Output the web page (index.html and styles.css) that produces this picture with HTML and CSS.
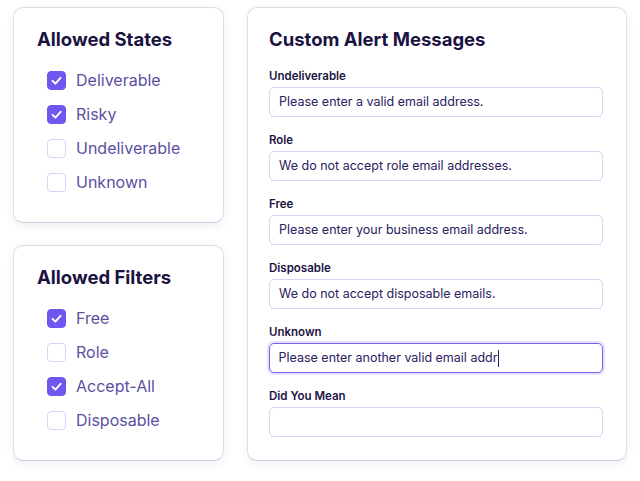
FILE: index.html
```html
<!DOCTYPE html>
<html>
<head>
<meta charset="utf-8">
<link rel="stylesheet" href="styles.css">
</head>
<body>
<div class="page">
  <div class="left-col">
    <div class="card side-card">
      <h2 class="title">Allowed States</h2>
      <ul class="checks">
        <li class="row"><span class="box checked"><svg viewBox="0 0 18 18"><path d="M4.8 9.4 L7.8 12.3 L13.3 6.2"/></svg></span><span class="lbl">Deliverable</span></li>
        <li class="row"><span class="box checked"><svg viewBox="0 0 18 18"><path d="M4.8 9.4 L7.8 12.3 L13.3 6.2"/></svg></span><span class="lbl">Risky</span></li>
        <li class="row"><span class="box"></span><span class="lbl">Undeliverable</span></li>
        <li class="row"><span class="box"></span><span class="lbl">Unknown</span></li>
      </ul>
    </div>
    <div class="card side-card">
      <h2 class="title">Allowed Filters</h2>
      <ul class="checks">
        <li class="row"><span class="box checked"><svg viewBox="0 0 18 18"><path d="M4.8 9.4 L7.8 12.3 L13.3 6.2"/></svg></span><span class="lbl">Free</span></li>
        <li class="row"><span class="box"></span><span class="lbl">Role</span></li>
        <li class="row"><span class="box checked"><svg viewBox="0 0 18 18"><path d="M4.8 9.4 L7.8 12.3 L13.3 6.2"/></svg></span><span class="lbl">Accept-All</span></li>
        <li class="row"><span class="box"></span><span class="lbl">Disposable</span></li>
      </ul>
    </div>
  </div>
  <div class="card main-card">
    <h2 class="title">Custom Alert Messages</h2>
    <div class="fields">
      <div class="field"><div class="flabel">Undeliverable</div><div class="input">Please enter a valid email address.</div></div>
      <div class="field"><div class="flabel">Role</div><div class="input">We do not accept role email addresses.</div></div>
      <div class="field"><div class="flabel">Free</div><div class="input">Please enter your business email address.</div></div>
      <div class="field"><div class="flabel">Disposable</div><div class="input">We do not accept disposable emails.</div></div>
      <div class="field"><div class="flabel">Unknown</div><div class="input focus">Please enter another valid email addr<span class="caret"></span></div></div>
      <div class="field"><div class="flabel">Did You Mean</div><div class="input"></div></div>
    </div>
  </div>
</div>
</body>
</html>
```
FILE: styles.css
```css
* { box-sizing: border-box; }
html, body { margin: 0; padding: 0; background: #ffffff; }
body { font-family: Inter, "Noto Sans", sans-serif; width: 640px; height: 481px; overflow: hidden; }
.page { display: flex; gap: 23px; padding: 7px 0 0 13px; }
.left-col { display: flex; flex-direction: column; gap: 22px; width: 211px; }
.card {
  background: #fff;
  border: 1px solid #dedce8;
  border-bottom-color: #cdcbdc;
  border-radius: 10px;
  box-shadow: 0 3px 8px rgba(40, 30, 90, 0.07);
}
.side-card { height: 216px; padding: 19px 10px 0 23px; }
.title {
  margin: 0;
  font-size: 18.5px;
  line-height: 24px;
  font-weight: 700;
  color: #1a1240;
}
.checks { list-style: none; margin: 12px 0 0 10px; padding: 0; }
.row { display: flex; align-items: center; height: 34px; gap: 10px; }
.box {
  width: 19px; height: 19px;
  border: 1.5px solid #d9d2f7;
  border-radius: 4px;
  background: #fff;
  display: flex;
  flex: none;
}
.box.checked { background: #7056ef; border-color: #7056ef; }
.box svg { width: 100%; height: 100%; }
.box svg path { fill: none; stroke: #fff; stroke-width: 2.1; stroke-linecap: round; stroke-linejoin: round; }
.lbl { font-size: 16px; color: #5c4f9f; line-height: 20px; }
.main-card { width: 380px; height: 454px; padding: 19px 23px 0 21px; }
.fields { margin-top: 17px; display: flex; flex-direction: column; gap: 15px; }
.flabel { font-size: 11.5px; font-weight: 600; line-height: 16px; color: #1c1444; margin-bottom: 3px; }
.input {
  height: 30px;
  border: 1px solid #d8d2f5;
  border-radius: 5px;
  padding: 0 9px;
  font-size: 12.5px;
  line-height: 28px;
  color: #2b2160;
  display: flex;
  align-items: center;
}
.input.focus {
  border: 1.5px solid #7a5bf5;
  box-shadow: 0 0 0 2px #e6e0fd;
  padding-left: 8.5px;
}
.caret { display: inline-block; width: 1px; height: 17px; background: #2b2160; margin-left: 1px; }
```
